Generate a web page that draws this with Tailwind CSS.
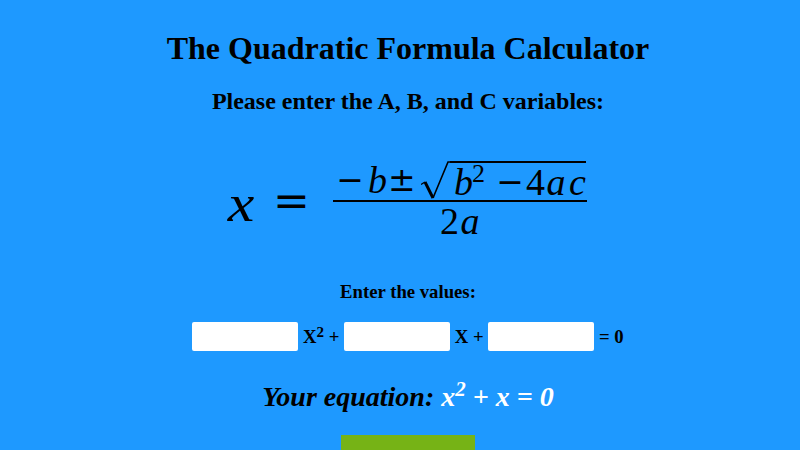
<!DOCTYPE html>
<html lang="en">
<head>
  <meta charset="UTF-8">
  <title>The Quadratic Formula Calculator</title>
  <script src="https://cdn.jsdelivr.net/npm/@tailwindcss/browser@4"></script>
</head>
<body class="bg-[#1e99ff] h-[450px] overflow-hidden font-['Liberation_Serif',serif] text-black">
  <div class="ml-[16px] w-[784px] h-[450px] overflow-hidden flex flex-col items-center">
    <h1 class="mt-[30px] shrink-0 text-[32px] leading-[37px] font-bold">The Quadratic Formula Calculator</h1>
    <h2 class="mt-[20px] shrink-0 text-[24px] leading-[28px] font-bold">Please enter the A, B, and C variables:</h2>

    <!-- formula, was an image in the original -->
    <div class="mt-[37px] shrink-0 h-[96px] w-[360px] flex items-center text-black">
      <span class="italic text-[52px] leading-none w-[26px] text-center scale-x-115 mt-[8px]">x</span>
      <span class="font-['DejaVu_Serif',serif] text-[44px] leading-none w-[37px] text-center ml-[19px] mt-[2px]">=</span>
      <div class="ml-[23px] w-[254px] flex flex-col">
        <div class="flex h-[39px] pl-[3px] text-[38px] leading-[38px] italic">
          <span class="font-['DejaVu_Serif',serif] not-italic text-[33px] w-[28px] text-center">−</span>
          <span class="w-[17px] ml-[4px] text-center">b</span>
          <span class="font-['DejaVu_Serif',serif] not-italic text-[33px] w-[27px] ml-[3px] text-center">±</span>
          <svg class="w-[29px] h-[39px] ml-[6px]" viewBox="0 0 29 39" fill="none" stroke="black" stroke-width="1.3">
            <path d="M0 23.5L4 21"/>
            <path d="M4 21L12 37" stroke-width="3"/>
            <path d="M12 37L27 1H29" stroke-width="1.6"/>
          </svg>
          <div class="flex w-[136px] h-[39px] border-t-2 border-black">
            <span class="w-[17px] ml-[4px] text-center">b</span>
            <span class="not-italic text-[26px] leading-[22px] w-[15px] text-center">2</span>
            <span class="font-['DejaVu_Serif',serif] not-italic text-[33px] w-[28px] ml-[10px] text-center">−</span>
            <span class="not-italic w-[18px] ml-[2px] text-center">4</span>
            <span class="w-[20px] ml-[2px] text-center">a</span>
            <span class="w-[17px] ml-[3px] text-center">c</span>
          </div>
        </div>
        <div class="h-[2px] bg-black"></div>
        <div class="h-[38px] flex justify-center text-[38px] leading-[38px] italic">
          <span class="not-italic w-[20px] text-center">2</span>
          <span class="w-[21px] text-center">a</span>
        </div>
      </div>
    </div>

    <p class="mt-[33px] shrink-0 text-[18.72px] leading-[21px] font-bold">Enter the values:</p>

    <div class="mt-[20px] shrink-0 h-[29px] font-bold text-[18.72px] leading-[29px] whitespace-nowrap">
      <input class="w-[106px] h-[29px] bg-white rounded-[2px] align-top" type="text">
      X<sup class="text-[15px] leading-none top-[-6px]">2</sup> +
      <input class="w-[106px] h-[29px] bg-white rounded-[2px] align-top" type="text">
      X +
      <input class="w-[106px] h-[29px] bg-white rounded-[2px] align-top" type="text">
      = 0
    </div>

    <p class="mt-[30px] shrink-0 text-[28px] leading-[32px] font-bold italic">Your equation: <span class="text-white">x<sup class="text-[21px] leading-none">2</sup> + x = 0</span></p>

    <div class="mt-[22px] w-[134px] h-[40px] shrink-0 bg-[#76b316]"></div>
  </div>
</body>
</html>
